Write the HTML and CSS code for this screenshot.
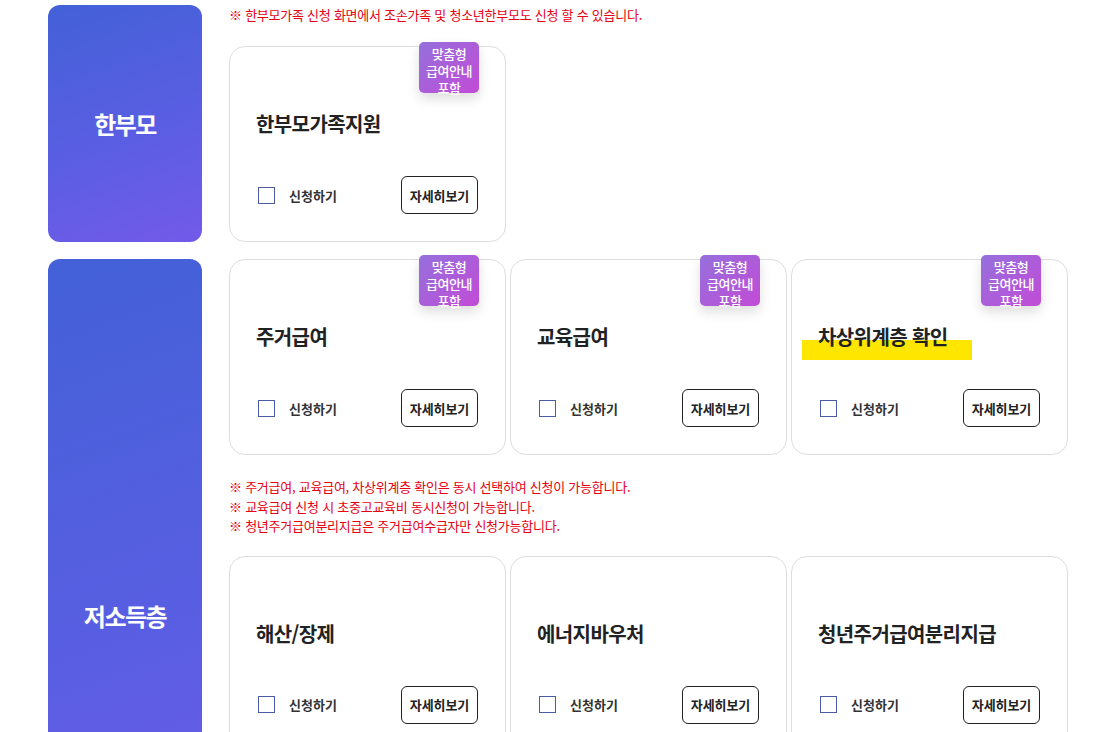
FILE: index.html
```html
<!DOCTYPE html>
<html lang="ko">
<head>
    <meta charset="UTF-8">
    <meta name="viewport" content="width=device-width, initial-scale=1.0">
    <title>복지서비스 신청</title>
    <link rel="stylesheet" href="styles.css">
</head>
<body>
    <div class="service-list">
        <!-- 한부모 -->
        <div class="group">
            <div class="group-label">한부모</div>
            <div class="group-body">
                <p class="notice">※ 한부모가족 신청 화면에서 조손가족 및 청소년한부모도 신청 할 수 있습니다.</p>
                <div class="card-row">
                    <div class="card">
                        <span class="badge">맞춤형<br>급여안내<br>포함</span>
                        <h3 class="card-title">한부모가족지원</h3>
                        <div class="card-foot">
                            <label class="apply"><span class="check"></span>신청하기</label>
                            <button class="btn-detail">자세히보기</button>
                        </div>
                    </div>
                </div>
            </div>
        </div>

        <!-- 저소득층 -->
        <div class="group">
            <div class="group-label tall">저소득층</div>
            <div class="group-body">
                <div class="card-row">
                    <div class="card">
                        <span class="badge">맞춤형<br>급여안내<br>포함</span>
                        <h3 class="card-title">주거급여</h3>
                        <div class="card-foot">
                            <label class="apply"><span class="check"></span>신청하기</label>
                            <button class="btn-detail">자세히보기</button>
                        </div>
                    </div>
                    <div class="card">
                        <span class="badge">맞춤형<br>급여안내<br>포함</span>
                        <h3 class="card-title">교육급여</h3>
                        <div class="card-foot">
                            <label class="apply"><span class="check"></span>신청하기</label>
                            <button class="btn-detail">자세히보기</button>
                        </div>
                    </div>
                    <div class="card">
                        <span class="badge">맞춤형<br>급여안내<br>포함</span>
                        <h3 class="card-title"><span class="mark">차상위계층 확인</span></h3>
                        <div class="card-foot">
                            <label class="apply"><span class="check"></span>신청하기</label>
                            <button class="btn-detail">자세히보기</button>
                        </div>
                    </div>
                </div>

                <div class="notice-list">
                    <p>※ 주거급여, 교육급여, 차상위계층 확인은 동시 선택하여 신청이 가능합니다.</p>
                    <p>※ 교육급여 신청 시 초중고교육비 동시신청이 가능합니다.</p>
                    <p>※ 청년주거급여분리지급은 주거급여수급자만 신청가능합니다.</p>
                </div>

                <div class="card-row">
                    <div class="card">
                        <h3 class="card-title">해산/장제</h3>
                        <div class="card-foot">
                            <label class="apply"><span class="check"></span>신청하기</label>
                            <button class="btn-detail">자세히보기</button>
                        </div>
                    </div>
                    <div class="card">
                        <h3 class="card-title">에너지바우처</h3>
                        <div class="card-foot">
                            <label class="apply"><span class="check"></span>신청하기</label>
                            <button class="btn-detail">자세히보기</button>
                        </div>
                    </div>
                    <div class="card">
                        <h3 class="card-title">청년주거급여분리지급</h3>
                        <div class="card-foot">
                            <label class="apply"><span class="check"></span>신청하기</label>
                            <button class="btn-detail">자세히보기</button>
                        </div>
                    </div>
                </div>
            </div>
        </div>
    </div>
</body>
</html>
```

FILE: styles.css
```css
body {
    margin: 0;
    padding-top: 5px;
    background: #fff;
    color: #222;
    font-family: "Noto Sans CJK KR", "Noto Sans", sans-serif;
}
.service-list {
    padding-left: 48px;
}
.group {
    display: flex;
    gap: 27px;
    margin-bottom: 17px;
}
.group-label {
    flex: none;
    width: 154px;
    border-radius: 12px;
    background: linear-gradient(160deg, #4361d8 0%, #5a5ee2 55%, #735ae9 100%);
    color: #fff;
    font-size: 24px;
    font-weight: bold;
    letter-spacing: -1.5px;
    display: flex;
    align-items: center;
    justify-content: center;
}
.group-label.tall {
    align-self: flex-start;
    height: 712px;
}
.group-body {
    width: 839px;
}
.notice {
    margin: 0 0 21px;
    color: #e60012;
    font-size: 13px;
    line-height: 20px;
    letter-spacing: -0.25px;
}
.notice-list {
    margin: 22px 0 20px;
    color: #e60012;
    font-size: 13px;
    line-height: 19.5px;
    letter-spacing: -0.25px;
}
.notice-list p {
    margin: 0;
}
.card-row {
    display: grid;
    grid-template-columns: repeat(3, 277px);
    gap: 4px;
}
.card {
    position: relative;
    box-sizing: border-box;
    height: 196px;
    padding: 62px 27px 27px 26px;
    border: 1px solid #dedede;
    border-radius: 16px;
    background: #fff;
    display: flex;
    flex-direction: column;
}
.badge {
    position: absolute;
    top: -5px;
    right: 26px;
    box-sizing: border-box;
    width: 60px;
    height: 51px;
    padding-top: 3px;
    border-radius: 5px;
    background: linear-gradient(135deg, #9570dc 0%, #c24bd6 100%);
    box-shadow: 0 6px 12px rgba(0, 0, 0, 0.13);
    color: #fff;
    font-size: 13px;
    font-weight: 500;
    line-height: 17px;
    letter-spacing: -0.5px;
    text-align: center;
}
.card-title {
    margin: 0;
    font-size: 20px;
    line-height: 30px;
    font-weight: bold;
    letter-spacing: -0.6px;
    color: #222;
}
.mark {
    position: relative;
    z-index: 0;
}
.mark::before {
    content: "";
    position: absolute;
    z-index: -1;
    left: -16px;
    top: 18px;
    width: 170px;
    height: 20px;
    background: #ffe600;
}
.card-foot {
    margin-top: auto;
    display: flex;
    align-items: center;
    justify-content: space-between;
}
.apply {
    display: flex;
    align-items: center;
    gap: 14px;
    margin-left: 2px;
    font-size: 13px;
    font-weight: bold;
    color: #333;
}
.check {
    width: 17px;
    height: 17px;
    box-sizing: border-box;
    border: 1px solid #4b5ba9;
}
.btn-detail {
    width: 77px;
    height: 38px;
    padding: 0;
    border: 1px solid #222;
    border-radius: 6px;
    background: #fff;
    color: #222;
    font-family: inherit;
    font-size: 13px;
    font-weight: bold;
    letter-spacing: -0.1px;
    cursor: pointer;
}
```
